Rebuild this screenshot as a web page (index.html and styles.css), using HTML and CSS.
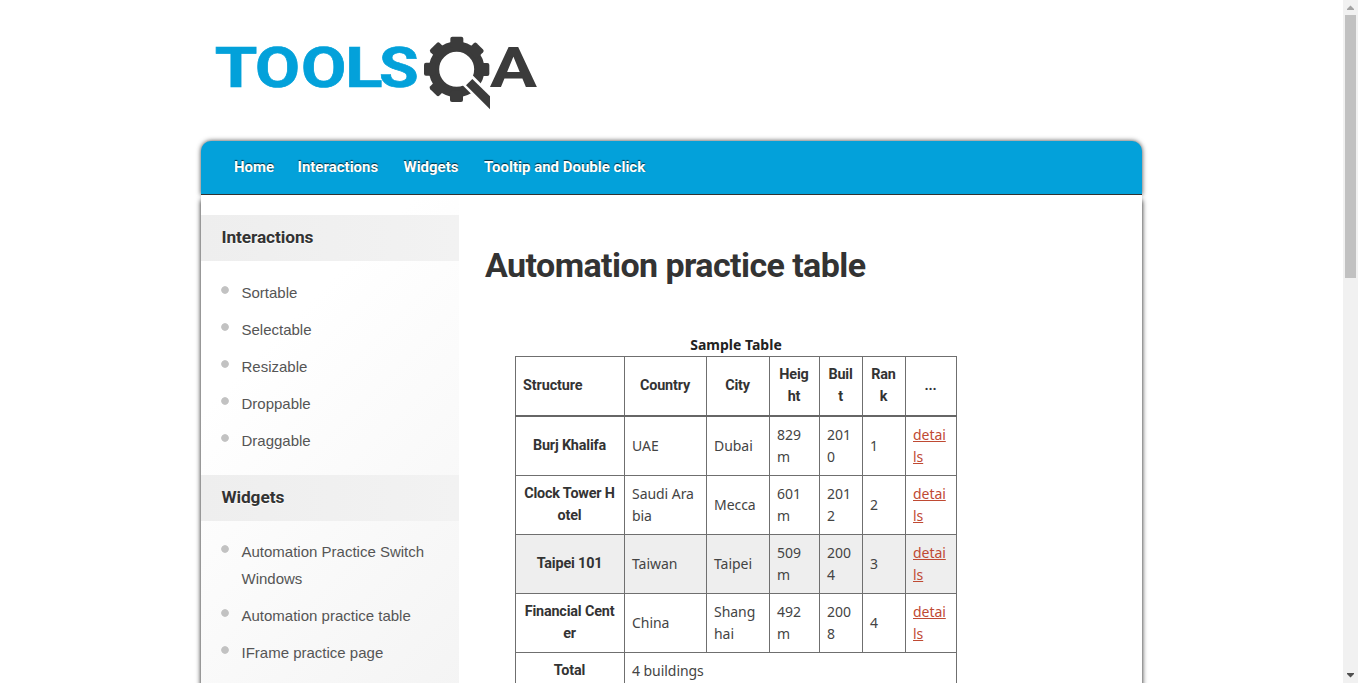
FILE: index.html
```
<!DOCTYPE html>
<html lang="en">
<head>
<meta charset="utf-8">
<title>Automation practice table</title>
<link rel="stylesheet" href="styles.css">
</head>
<body>
<div class="viewport">
  <div class="page">
    <header class="site-header">
      <svg class="logo" width="350" height="100" viewBox="0 0 1050 300" role="img" aria-label="ToolsQA">
        <g class="logo-word" font-size="166">
          <text x="44" y="200" textLength="128" lengthAdjust="spacingAndGlyphs">T</text>
          <text x="165" y="200" textLength="135" lengthAdjust="spacingAndGlyphs">O</text>
          <text x="303" y="200" textLength="136" lengthAdjust="spacingAndGlyphs">O</text>
          <text x="436" y="200" textLength="112" lengthAdjust="spacingAndGlyphs">L</text>
          <text x="537" y="200" textLength="119" lengthAdjust="spacingAndGlyphs">S</text>
        </g>
        <g class="logo-gear">
          <circle cx="770" cy="148" r="68" fill="none" stroke="#3b3b3b" stroke-width="31"/>
          <rect x="751" y="50" width="39" height="34" rx="6"/>
          <rect x="751" y="50" width="39" height="34" rx="6" transform="rotate(45 770 148)"/>
          <rect x="751" y="50" width="39" height="34" rx="6" transform="rotate(90 770 148)"/>
          <rect x="751" y="50" width="39" height="34" rx="6" transform="rotate(180 770 148)"/>
          <rect x="751" y="50" width="39" height="34" rx="6" transform="rotate(225 770 148)"/>
          <rect x="751" y="50" width="39" height="34" rx="6" transform="rotate(270 770 148)"/>
          <rect x="751" y="50" width="39" height="34" rx="6" transform="rotate(315 770 148)"/>
          <path fill="#fff" d="M785 193L815 163L880 228V272H864Z"/>
          <path d="M817 177L870 229V268L798 196Z"/>
        </g>
        <text class="logo-a" font-size="169" x="869" y="200" textLength="142" lengthAdjust="spacingAndGlyphs">A</text>
      </svg>
    </header>
    <nav class="nav">
      <a class="nav-home">Home</a><a class="nav-inter">Interactions</a><a class="nav-widgets">Widgets</a><a class="nav-tip">Tooltip and Double click</a>
    </nav>
    <main class="main">
      <aside class="sidebar">
        <h3 class="side-title">Interactions</h3>
        <ul class="side-list">
          <li>Sortable</li><li>Selectable</li><li>Resizable</li><li>Droppable</li><li>Draggable</li>
        </ul>
        <h3 class="side-title">Widgets</h3>
        <ul class="side-list side-list-b">
          <li>Automation Practice Switch Windows</li><li>Automation practice table</li><li>IFrame practice page</li>
        </ul>
      </aside>
      <section class="content">
        <h1 class="title">Automation practice table</h1>
        <table class="sample">
          <caption>Sample Table</caption>
          <colgroup><col class="c1"><col class="c2"><col class="c3"><col class="c4"><col class="c5"><col class="c6"><col class="c7"></colgroup>
          <thead>
            <tr><th class="left">Structure</th><th>Country</th><th>City</th><th>Heig<br>ht</th><th>Buil<br>t</th><th>Ran<br>k</th><th>...</th></tr>
          </thead>
          <tbody>
            <tr class="first"><th>Burj Khalifa</th><td>UAE</td><td>Dubai</td><td>829<br>m</td><td>201<br>0</td><td>1</td><td><a>detai<br>ls</a></td></tr>
            <tr><th>Clock Tower H<br>otel</th><td>Saudi Ara<br>bia</td><td>Mecca</td><td>601<br>m</td><td>201<br>2</td><td>2</td><td><a>detai<br>ls</a></td></tr>
            <tr class="shaded"><th>Taipei 101</th><td>Taiwan</td><td>Taipei</td><td>509<br>m</td><td>200<br>4</td><td>3</td><td><a>detai<br>ls</a></td></tr>
            <tr><th>Financial Cent<br>er</th><td>China</td><td>Shang<br>hai</td><td>492<br>m</td><td>200<br>8</td><td>4</td><td><a>detai<br>ls</a></td></tr>
            <tr class="total"><th>Total</th><td colspan="6">4 buildings</td></tr>
          </tbody>
        </table>
      </section>
    </main>
  </div>
  <div class="scrollbar">
    <svg width="15" height="15" viewBox="0 0 15 15"><path fill="#a3a3a3" d="M4 10V9L7.5 5.5L11 9V10Z"/></svg>
    <div class="thumb"></div>
    <svg class="down" width="15" height="15" viewBox="0 0 15 15"><path fill="#505050" d="M4 5V6L7.5 9.5L11 6V5Z"/></svg>
  </div>
</div>
</body>
</html>
```
FILE: styles.css
```
* { box-sizing: border-box; }
body { margin: 0; background: #fff; color: #333; overflow: hidden; }
.viewport { display: flex; height: 683px; overflow: hidden; }
.page { flex: 1; padding: 0 201px; display: flex; flex-direction: column; }
.site-header { height: 141px; padding-top: 20px; flex: none; }
.logo { display: block; margin-left: -1px; }
.logo-word { font-family: Roboto, sans-serif; font-weight: 700; fill: #03a1da; stroke: #03a1da; stroke-width: 2; }
.logo-gear { fill: #3b3b3b; }
.logo-a { font-family: Roboto, sans-serif; font-weight: 700; fill: #3b3b3b; }
.nav {
  flex: none; height: 54px; padding: 0 33px 1px; display: flex; gap: 24px; align-items: center;
  background: #03a1da; border-bottom: 1px solid #333; border-radius: 10px 10px 0 0;
  box-shadow: 0 0 5px rgba(0,0,0,.75);
  font: 700 15px/22px Roboto, sans-serif;
  color: #fff; text-shadow: 0 -1px 1px rgba(0,0,0,.75);
}
.nav a { white-space: nowrap; }
.nav-home { width: 39.5px; }
.nav-inter { width: 82px; }
.nav-widgets { width: 56.5px; }
.nav-tip { width: 161px; }
.main { flex: none; height: 600px; display: flex; background: #fff; box-shadow: 0 5px 5px rgba(0,0,0,.95); }
.sidebar { width: 258px; padding-top: 20px; background: linear-gradient(135deg, #fff 25%, #f2f2f2); }
.side-title {
  margin: 0; height: 46px; padding-left: 20.5px;
  background: linear-gradient(90deg, #eee, #f2f2f2);
  font: 700 17.3px/45px Roboto, sans-serif; letter-spacing: -.1px; color: #333; text-shadow: 0 1px 1px #fff;
}
.side-list { list-style: none; margin: 0; padding: 18px 20px 11px 20px; font: 15px/27px "Liberation Sans", Arial, sans-serif; color: #555; }
.side-list-b { padding-top: 17px; }
.side-list li { margin-bottom: 10px; padding-left: 20.5px; background: radial-gradient(circle at 4px 11px, #c2c2c2 3.4px, transparent 4.2px) no-repeat; }
.content { padding: 44px 0 0 26px; }
.title { margin: 0; height: 52px; font: 700 34px/52px Roboto, sans-serif; letter-spacing: -.58px; color: #333; white-space: nowrap; }
.sample { margin: 43px 0 0 30px; width: 442px; table-layout: fixed; border-collapse: collapse; font: 14px/22px "Noto Sans", sans-serif; color: #444; }
.sample caption { height: 22px; font: 700 14px/22px "Noto Sans", sans-serif; color: #222; }
.sample th, .sample td { height: 59px; padding: 0 7px 1px; border: 1px solid #6f6f6f; text-align: left; vertical-align: middle; white-space: nowrap; }
.sample td { letter-spacing: -.05px; }
.sample th { font: 700 14.4px/22px Roboto, sans-serif; letter-spacing: -.17px; text-align: center; color: #333; padding: 0 6px 0 5px; }
.sample th.left { text-align: left; padding-left: 7px; letter-spacing: -.1px; }
.sample thead th { height: 59px; border-bottom: 2px solid #666; padding-top: 1px; }
.sample .first th { height: 60px; padding-top: 1px; }
.sample .first td { height: 60px; padding-top: 1px; padding-bottom: 0; }
.sample .shaded { background: #eee; }
.sample .total th, .sample .total td { height: 37px; }
.sample a { color: #bf4a33; text-decoration: underline; }
.c1 { width: 109px; } .c2 { width: 82px; } .c3 { width: 63px; } .c4 { width: 50px; } .c5 { width: 43px; } .c6 { width: 43px; } .c7 { width: 51px; }
.scrollbar { width: 15px; background: #f1f1f1; display: flex; flex-direction: column; }
.scrollbar svg { display: block; flex: none; }
.thumb { width: 11px; height: 263px; margin: 0 2px; background: #c1c1c1; }
.down { margin-top: auto; }
```
